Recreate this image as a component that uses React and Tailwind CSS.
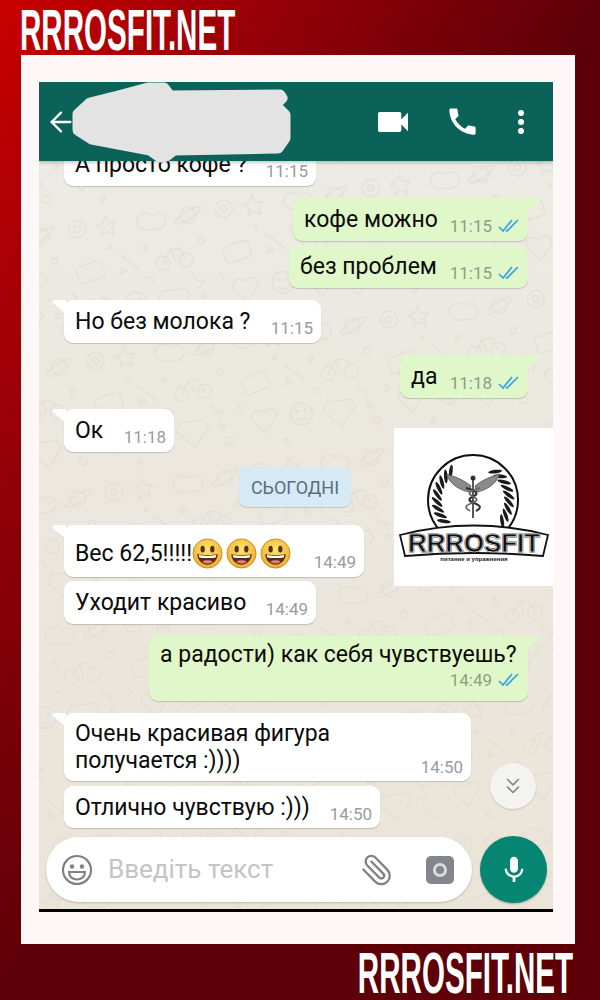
import React from 'react';
import { ArrowLeft, ChevronsDown, Paperclip } from 'lucide-react';

const BRAND_FONT = "font-['Liberation_Sans_Narrow','Liberation_Sans',sans-serif]";

const Ticks = () => (
  <svg width="22" height="14" viewBox="0 0 22 14" fill="none" stroke="#38a3dd" strokeWidth="1.700" className="ml-[6px]">
    <path d="M1 8l4 4L14 1" />
    <path d="M8 11l1 1L20 1" />
  </svg>
);

const Time = ({ value, read }) => (
  <span className={`flex items-center text-[17px] leading-[20px] shrink-0 ${read ? 'text-[#8f9c88]' : 'text-[#9b9b9b]'}`}>
    {value}
    {read && <Ticks />}
  </span>
);

const Bubble = ({ mine, tail, width, height, className = '', children }) => (
  <div
    className={`relative rounded-[9px] shadow-[0_1px_1px_rgba(0,0,0,0.18)] font-['Roboto',sans-serif] text-[23px] text-[#0a0a0a] ${
      mine ? 'self-end bg-[#e0f8c9]' : 'self-start bg-white'
    } ${className}`}
    style={{ width, height }}
  >
    {tail && !mine && (
      <svg width="16" height="14" viewBox="0 0 16 14" className="absolute -left-[12px] top-0">
        <path d="M14 0H3C0 0 0 2 1.500 3.500L14 14z" fill="#fff" />
      </svg>
    )}
    {tail && mine && (
      <svg width="16" height="14" viewBox="0 0 16 14" className="absolute -right-[12px] top-0">
        <path d="M2 0h11c3 0 3 2 1.500 3.500L2 14z" fill="#e0f8c9" />
      </svg>
    )}
    {children}
  </div>
);

const Row = ({ text, time, read }) => (
  <div className="flex justify-between pl-[11px] pr-[8px] pt-[9px]">
    <span className="leading-[26px] whitespace-nowrap">{text}</span>
    <span className="mt-[9px]">
      <Time value={time} read={read} />
    </span>
  </div>
);

const Smiley = () => (
  <svg width="31" height="31" viewBox="0 0 32 32">
    <circle cx="16" cy="16" r="15" fill="url(#smileyFill)" stroke="#c98a1a" strokeWidth="1" />
    <ellipse cx="11" cy="11.500" rx="2.200" ry="3.400" fill="#4a3418" />
    <ellipse cx="21" cy="11.500" rx="2.200" ry="3.400" fill="#4a3418" />
    <path d="M5.500 16.500c3 1.500 18 1.500 21 0 0 6-4.500 11-10.500 11s-10.500-5-10.500-11z" fill="#5b2a14" />
    <path d="M7 17.500c4 1 14 1 18 0l-.5 2.500c-4 1-13 1-17 0z" fill="#fff" />
    <path d="M10.500 24.500c3-2 8-2 11 0-3 2.500-8 2.500-11 0z" fill="#e8807a" />
  </svg>
);

const Wallpaper = () => (
  <svg className="absolute inset-0 w-full h-full" aria-hidden="true">
    <defs>
      <pattern id="doodles" width="190" height="170" patternUnits="userSpaceOnUse" patternTransform="scale(0.78) rotate(-8)">
        <g fill="none" stroke="#e2ddd2" strokeWidth="1.500">
          <circle cx="22" cy="24" r="11" />
          <circle cx="22" cy="24" r="4" />
          <path d="M60 12l4 9 9 1-7 6 2 9-8-5-8 5 2-9-7-6 9-1z" />
          <path d="M100 30c-6-12 12-20 20-10 10-6 22 4 14 14-4 6-30 6-34-4z" />
          <circle cx="165" cy="26" r="10" />
          <ellipse cx="165" cy="26" rx="19" ry="5" transform="rotate(-25 165 26)" />
          <rect x="14" y="70" width="34" height="22" rx="5" transform="rotate(-12 30 80)" />
          <path d="M70 62l26 26M70 88l8-2-6-6z" />
          <circle cx="125" cy="82" r="9" />
          <circle cx="155" cy="82" r="9" />
          <path d="M125 82l12-16h12l6 16M137 66l4 16" />
          <path d="M22 130c-8-10 6-20 14-10 8-10 22 0 14 10l-14 16z" />
          <circle cx="84" cy="128" r="14" />
          <circle cx="79" cy="124" r="1.500" />
          <circle cx="89" cy="124" r="1.500" />
          <path d="M77 133c4 4 10 4 14 0" />
          <path d="M118 118h30l6 10-21 24-21-24z" />
          <circle cx="172" cy="130" r="3" />
          <circle cx="178" cy="150" r="5" />
          <circle cx="60" cy="160" r="3" />
          <circle cx="106" cy="60" r="3" />
          <circle cx="60" cy="52" r="2.500" />
          <circle cx="178" cy="60" r="4" />
          <path d="M4 104l6 6-6 6M100 100c8-6 14 2 10 8" />
          <path d="M160 100l5 10 10 2-8 7" />
        </g>
      </pattern>
    </defs>
    <rect width="100%" height="100%" fill="url(#doodles)" />
  </svg>
);

const laurelAngles = [128, 139, 150, 161, 172, 183, 194, 205, 216];

const Leaf = ({ angle }) => {
  const rad = (angle * Math.PI) / 180;
  const x = 79 + 36 * Math.cos(rad);
  const y = 72 - 36 * Math.sin(rad);
  return <ellipse cx={x} cy={y} rx="7" ry="1.800" fill="#1a1a1a" transform={`rotate(${-angle + 45} ${x} ${y})`} />;
};

const Logo = () => (
  <svg width="159" height="158" viewBox="0 0 159 158" className="block">
    <circle cx="79" cy="72" r="45" fill="none" stroke="#111" strokeWidth="2" />
    {laurelAngles.map((a) => (
      <Leaf key={a} angle={a} />
    ))}
    {laurelAngles.map((a) => (
      <Leaf key={a} angle={180 - a + 360} />
    ))}
    <path d="M52 46c8 2 18 6 25 12l-2 6c-10-2-19-8-23-18z" fill="#8a8a8a" stroke="#333" strokeWidth=".6" />
    <path d="M106 46c-8 2-18 6-25 12l2 6c10-2 19-8 23-18z" fill="#8a8a8a" stroke="#333" strokeWidth=".6" />
    <circle cx="79" cy="50" r="2.500" fill="#333" />
    <path d="M79 50v40" stroke="#222" strokeWidth="1.500" />
    <path d="M72 60c12 3 12 6 8 8s-8 4 0 7 7 5 2 8" fill="none" stroke="#333" strokeWidth="2.200" />
    <path d="M86 60c-12 3-12 6-8 8s8 4 0 7-7 5-2 8" fill="none" stroke="#666" strokeWidth="1.800" />
    <path d="M6 107Q80 88 154 107L149 128Q80 122 11 128z" fill="#fff" stroke="#111" strokeWidth="1.800" />
    <text x="80" y="124" textAnchor="middle" fontFamily="'Liberation Sans',sans-serif" fontWeight="700" fontSize="25" textLength="132" lengthAdjust="spacingAndGlyphs" fill="#111" stroke="#111" strokeWidth="1.200">RRROSFIT</text>
    <text x="80" y="124" textAnchor="middle" fontFamily="'Liberation Sans',sans-serif" fontWeight="700" fontSize="25" textLength="132" lengthAdjust="spacingAndGlyphs" fill="none" stroke="#fff" strokeWidth="0.600" aria-hidden="true">RRROSFIT</text>
    <text x="80" y="133" textAnchor="middle" fontFamily="'Liberation Sans',sans-serif" fontWeight="700" fontSize="6" fill="#222">питание и упражнения</text>
  </svg>
);

const Brand = ({ origin }) => (
  <span className={`inline-block w-max scale-x-[0.51] text-[58px] leading-[55px] font-bold text-white whitespace-nowrap ${origin} ${BRAND_FONT}`}>
    RRROSFIT.NET
  </span>
);

const App = () => (
  <div className="w-[600px] h-[1000px] overflow-hidden flex flex-col bg-linear-to-br from-[#c90000] to-[#5e0008] to-50%">
    <div className="h-[55px] pl-[20px] pt-[4px] flex items-center">
      <Brand origin="origin-left" />
    </div>

    <div className="mx-[21px] w-[554px] h-[889px] bg-[#fdf8f7] px-[18px] pt-[27px]">
      <div className="relative h-[830px] w-[514px] flex flex-col overflow-hidden border-b-[3px] border-black bg-linear-to-b from-[#ecebe5] to-[#ebe4d8]">
        <Wallpaper />

        {/* toolbar */}
        <div className="relative z-10 h-[79px] shrink-0 bg-[#0b6259] shadow-[0_2px_3px_rgba(0,0,0,0.2)] flex items-center pl-[6px] pr-[29px] text-white">
          <ArrowLeft size={32} strokeWidth={1.750} />
          <svg width="40" height="40" viewBox="0 0 24 24" fill="#fff" className="ml-auto">
            <path d="M17 10.500V7c0-.55-.45-1-1-1H4c-.55 0-1 .45-1 1v10c0 .55.45 1 1 1h12c.55 0 1-.45 1-1v-3.500l4 4v-11l-4 4z" />
          </svg>
          <svg width="35" height="35" viewBox="0 0 24 24" fill="#fff" className="ml-[32px]">
            <path d="M20.010 15.380c-1.230 0-2.420-.2-3.530-.56-.35-.12-.74-.03-1.010.24l-1.570 1.970c-2.830-1.350-5.480-3.900-6.890-6.830l1.950-1.660c.27-.28.35-.67.24-1.020-.37-1.110-.56-2.300-.56-3.530 0-.54-.45-.99-.99-.99H4.190C3.650 3 3 3.240 3 3.990 3 13.280 10.730 21 20.010 21c.71 0 .99-.63.99-1.180v-3.450c0-.54-.45-.99-.99-.99z" />
          </svg>
          <div className="ml-[38px] flex flex-col gap-[3px]">
            <span className="w-[6px] h-[6px] rounded-full bg-white" />
            <span className="w-[6px] h-[6px] rounded-full bg-white" />
            <span className="w-[6px] h-[6px] rounded-full bg-white" />
          </div>
        </div>

        {/* redacted contact name */}
        <svg width="300" height="90" viewBox="39 82 300 90" className="absolute z-20 left-0 top-0">
          <path
            d="M78 114L90 103L122 95L148 88L164 88L170 96L280 95L282 98L275 105L285 115L285 138L278 148L174 150L166 156L160 157L150 150L92 139L78 130z"
            fill="#e3e3e3"
            stroke="#e3e3e3"
            strokeWidth="11"
            strokeLinejoin="round"
          />
        </svg>

        {/* messages */}
        <div className="relative flex-1 flex flex-col px-[25px] -mt-[18px]">
          <Bubble width={252} height={43}>
            <Row text="А просто кофе ?" time="11:15" />
          </Bubble>
          <Bubble mine tail width={235} height={43} className="mt-[12px]">
            <Row text="кофе можно" time="11:15" read />
          </Bubble>
          <Bubble mine width={239} height={43} className="mt-[4px]">
            <Row text="без проблем" time="11:15" read />
          </Bubble>
          <Bubble tail width={257} height={43} className="mt-[12px]">
            <Row text="Но без молока ?" time="11:15" />
          </Bubble>
          <Bubble mine tail width={128} height={43} className="mt-[12px]">
            <Row text="да" time="11:18" read />
          </Bubble>
          <Bubble tail width={110} height={43} className="mt-[11px]">
            <Row text="Ок" time="11:18" />
          </Bubble>

          <div className="self-center mt-[15px] -ml-[2px] w-[112px] h-[40px] rounded-[8px] bg-[#d5eaf5] shadow-[0_1px_1px_rgba(0,0,0,0.15)] flex items-center justify-center font-['Roboto',sans-serif] text-[18px] text-[#55707f]">
            СЬОГОДНІ
          </div>

          <Bubble tail width={300} height={52} className="mt-[18px]">
            <div className="flex justify-between pl-[11px] pr-[8px] pt-[10px]">
              <span className="flex items-center gap-[3px] leading-[32px] whitespace-nowrap">
                <span className="-mr-[3px] pt-[1px]">Вес 62,5!!!!!</span>
                <Smiley />
                <Smiley />
                <Smiley />
              </span>
              <span className="mt-[17px]">
                <Time value="14:49" />
              </span>
            </div>
          </Bubble>
          <Bubble width={252} height={43} className="mt-[4px]">
            <Row text="Уходит красиво" time="14:49" />
          </Bubble>
          <Bubble mine tail width={379} height={65} className="mt-[12px]">
            <div className="pl-[11px] pr-[8px] pt-[6px] leading-[26px] whitespace-nowrap">а радости) как себя чувствуешь?</div>
            <div className="flex justify-end pr-[8px] mt-[2px]">
              <Time value="14:49" read />
            </div>
          </Bubble>
          <Bubble tail width={407} height={68} className="mt-[12px]">
            <div className="pl-[11px] pt-[7px] leading-[27px]">
              Очень красивая фигура
              <br />
              получается :))))
            </div>
            <div className="absolute right-[8px] bottom-[4px]">
              <Time value="14:50" />
            </div>
          </Bubble>
          <Bubble width={316} height={42} className="mt-[5px]">
            <Row text="Отлично чувствую :)))" time="14:50" />
          </Bubble>
        </div>

        {/* input bar */}
        <div className="relative shrink-0 flex items-center pl-[7px] pr-[6px] pb-[6px] gap-[8px]">
          <div className="w-[426px] h-[65px] rounded-full bg-white shadow-[0_1px_2px_rgba(0,0,0,0.2)] flex items-center pl-[15px] pr-[18px] font-['Roboto',sans-serif]">
            <svg width="32" height="32" viewBox="0 0 32 32" fill="none" stroke="#818181" strokeWidth="2.200">
              <circle cx="16" cy="16" r="14" />
              <circle cx="11" cy="12.500" r="2.200" fill="#818181" stroke="none" />
              <circle cx="21" cy="12.500" r="2.200" fill="#818181" stroke="none" />
              <path d="M8 18h16c0 5-4 7.500-8 7.500S8 23 8 18z" />
            </svg>
            <span className="ml-[15px] text-[26px] text-[#c4c4c4]">Введіть текст</span>
            <Paperclip size={34} strokeWidth={1.600} color="#818181" className="ml-auto -scale-x-100" />
            <span className="ml-[32px] w-[28px] h-[28px] rounded-[5px] bg-[#82868c] flex items-center justify-center">
              <span className="w-[14px] h-[14px] rounded-full border-[3px] border-[#dcdcdc]" />
            </span>
          </div>
          <div className="w-[67px] h-[67px] rounded-full bg-[#078573] shadow-[0_1px_2px_rgba(0,0,0,0.25)] flex items-center justify-center">
            <svg width="32" height="32" viewBox="0 0 24 24" fill="#fff">
              <path d="M12 14c1.660 0 3-1.340 3-3V5c0-1.660-1.340-3-3-3S9 3.340 9 5v6c0 1.660 1.340 3 3 3zm5.300-3c0 3-2.540 5.100-5.300 5.100S6.700 14 6.700 11H5c0 3.410 2.720 6.230 6 6.720V21h2v-3.280c3.280-.48 6-3.300 6-6.720h-1.700z" />
            </svg>
          </div>
        </div>

        {/* picture pasted over the chat */}
        <div className="absolute z-10 right-0 top-[346px] bg-white">
          <Logo />
        </div>

        {/* jump to latest */}
        <div className="absolute z-10 left-[451px] top-[681px] w-[46px] h-[46px] rounded-full bg-[#f4f3f0] shadow-[0_1px_2px_rgba(0,0,0,0.15)] flex items-center justify-center">
          <ChevronsDown size={26} strokeWidth={1.500} color="#7d8a8a" />
        </div>
      </div>
    </div>

    <div className="flex-1 pr-[27px] flex items-center justify-end">
      <Brand origin="origin-right" />
    </div>
    <svg width="0" height="0" className="absolute">
      <defs>
        <radialGradient id="smileyFill" cx="50%" cy="35%" r="70%">
          <stop offset="0%" stopColor="#ffe36b" />
          <stop offset="100%" stopColor="#f0a92a" />
        </radialGradient>
      </defs>
    </svg>
  </div>
);

export default App;
